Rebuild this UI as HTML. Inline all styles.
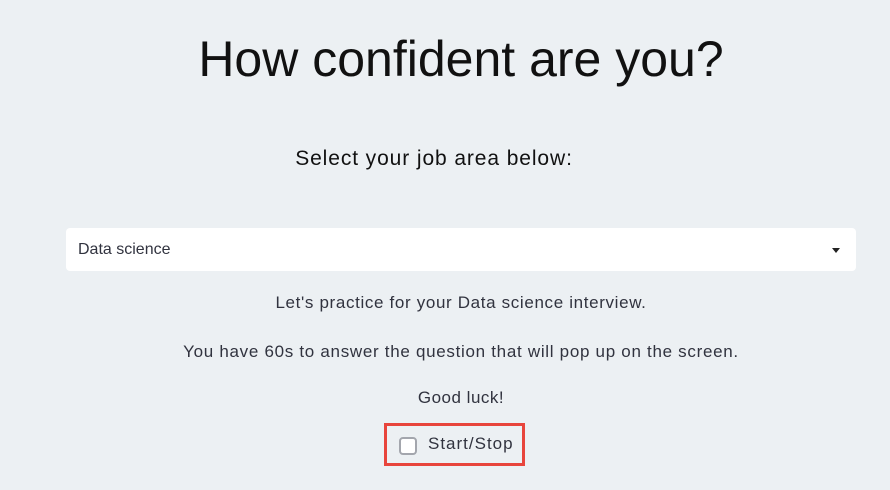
<!DOCTYPE html>
<html><head><style>
body{margin:0;width:890px;height:490px;background:#ecf0f3;font-family:"Liberation Sans",sans-serif;color:#262730;position:relative;overflow:hidden}
.a{position:absolute;white-space:nowrap}
.t{left:0;width:922px;text-align:center;font-size:17px;color:#31333f;letter-spacing:0.65px}
</style></head><body>
<div class="a" style="left:0;width:922px;text-align:center;top:30px;font-size:50px;color:#111">How confident are you?</div>
<div class="a" style="left:0;width:868px;text-align:center;top:147px;font-size:21px;color:#111;letter-spacing:0.9px">Select your job area below:</div>
<div class="a" style="left:66px;top:228px;width:790px;height:43px;background:#fff;border-radius:4px"></div>
<div class="a" style="left:78px;top:241px;font-size:16px;color:#31333f">Data science</div>
<div class="a" style="left:832px;top:248px;width:0;height:0;border-left:4px solid transparent;border-right:4px solid transparent;border-top:5px solid #222"></div>
<div class="a t" style="top:293px">Let's practice for your Data science interview.</div>
<div class="a t" style="top:342px;letter-spacing:0.7px">You have 60s to answer the question that will pop up on the screen.</div>
<div class="a t" style="top:388px;letter-spacing:0.5px">Good luck!</div>
<div class="a" style="left:384px;top:423px;width:135px;height:37px;border:3px solid #e8453c"></div>
<div class="a" style="left:399px;top:437px;width:14px;height:14px;border:2px solid #a3a6ad;border-radius:4px;background:#fff"></div>
<div class="a" style="left:428px;top:434px;font-size:17px;color:#31333f;letter-spacing:1px">Start/Stop</div>
</body></html>
